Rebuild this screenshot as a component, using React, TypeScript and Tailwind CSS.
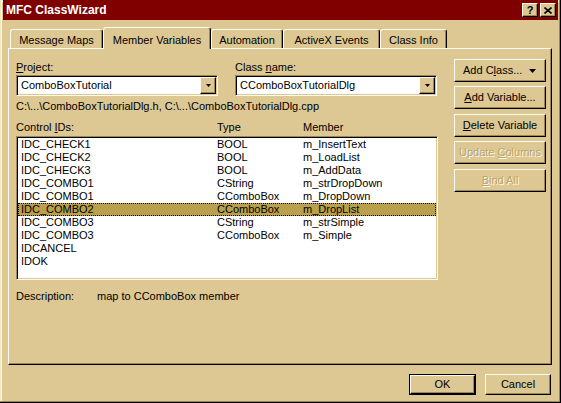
import React from 'react';

const face = 'bg-[#ddc893]';

// raised 3D edge used by buttons and tabs
const raised =
  'border border-t-[#fffbf0] border-l-[#fffbf0] border-b-black border-r-black shadow-[inset_-1px_-1px_0_#9c8855]';
const sunken =
  'border border-t-[#9c8855] border-l-[#9c8855] border-b-[#fffbf0] border-r-[#fffbf0] shadow-[inset_1px_1px_0_#000,inset_-1px_-1px_0_#ddc893]';

const rows = [
  ['IDC_CHECK1', 'BOOL', 'm_InsertText'],
  ['IDC_CHECK2', 'BOOL', 'm_LoadList'],
  ['IDC_CHECK3', 'BOOL', 'm_AddData'],
  ['IDC_COMBO1', 'CString', 'm_strDropDown'],
  ['IDC_COMBO1', 'CComboBox', 'm_DropDown'],
  ['IDC_COMBO2', 'CComboBox', 'm_DropList'],
  ['IDC_COMBO3', 'CString', 'm_strSimple'],
  ['IDC_COMBO3', 'CComboBox', 'm_Simple'],
  ['IDCANCEL', '', ''],
  ['IDOK', '', ''],
];

function Arrow({ w = 7, h = 4 }: { w?: number; h?: number }) {
  return (
    <svg width={w} height={h} viewBox={`0 0 ${w} ${h}`}>
      <path d={`M0 0H${w}L${w / 2} ${h}Z`} fill="#000" />
    </svg>
  );
}

function Combo({ value }: { value: string }) {
  return (
    <div className={`h-[21px] w-[202px] bg-white ${sunken} flex items-center`}>
      <span className="flex-1 pl-[4px] leading-[13px]">{value}</span>
      <div
        className={`mr-[1px] h-[17px] w-[16px] ${face} ${raised} flex items-center justify-center`}
      >
        <Arrow w={5} h={3} />
      </div>
    </div>
  );
}

function SideButton({
  children,
  disabled,
  split,
  className = '',
}: {
  children: React.ReactNode;
  disabled?: boolean;
  split?: boolean;
  className?: string;
}) {
  return (
    <div
      className={`h-[23px] w-[92px] ${face} ${raised} flex items-center ${
        split ? 'justify-between pl-[8px] pr-[9px]' : 'justify-center'
      } ${disabled ? 'text-[#b8a46c] [text-shadow:1px_1px_0_#fffbf0]' : ''} ${className}`}
    >
      {children}
    </div>
  );
}

export default function App() {
  const tabs = [
    { label: 'Message Maps', w: 'w-[93px]' },
    { label: 'Member Variables', w: 'w-[108px]', active: true },
    { label: 'Automation', w: 'w-[72px]' },
    { label: 'ActiveX Events', w: 'w-[97px]' },
    { label: 'Class Info', w: 'w-[67px]' },
  ];

  return (
    <div
      className={`w-[561px] h-[403px] ${face} px-[3px] text-[11px] leading-[13px] text-black font-['Liberation_Sans',Arial,sans-serif] shadow-[inset_-1px_-1px_0_#000,inset_-2px_-2px_0_#9c8855,inset_1px_1px_0_#f3e6c0,inset_2px_2px_0_#fffbf0] overflow-hidden`}
    >
      {/* Title bar */}
      <div className="h-[20px] bg-[#800000] flex items-center pl-[3px] pr-[2px]">
        <span className="flex-1 text-white font-bold text-[12px]">MFC ClassWizard</span>
        <div
          className={`h-[14px] w-[16px] ${face} ${raised} flex items-center justify-center font-bold text-[11px] leading-none`}
        >
          ?
        </div>
        <div
          className={`ml-[2px] h-[14px] w-[16px] ${face} ${raised} flex items-center justify-center`}
        >
          <svg width="8" height="7" viewBox="0 0 8 7">
            <path d="M0.5 0.5L7.5 6.5M7.5 0.5L0.5 6.5" stroke="#000" strokeWidth="1.6" />
          </svg>
        </div>
      </div>

      {/* Tabs */}
      <div className="mt-[7px] ml-[7px] h-[21px] flex items-end">
        {tabs.map((t) => (
          <div
            key={t.label}
            className={`${t.w} ${face} border-t border-l border-r border-t-[#fffbf0] border-l-[#fffbf0] border-r-black shadow-[inset_-1px_0_0_#9c8855] rounded-t-[3px] flex justify-center ${
              t.active ? 'relative z-10 h-[22px] -mb-px pt-[6px]' : 'h-[19px] pt-[4px]'
            }`}
          >
            {t.label}
          </div>
        ))}
      </div>

      {/* Panel */}
      <div
        className={`ml-[5px] w-[544px] h-[317px] border border-t-[#fffbf0] border-l-[#fffbf0] border-b-black border-r-black shadow-[inset_-1px_-1px_0_#9c8855] flex`}
      >
        <div className="ml-[7px] w-[422px] pt-[12px] flex flex-col">
          <div className="flex gap-[17px]">
            <div>
              <div className="h-[13px]">
                <span className="underline">P</span>roject:
              </div>
              <div className="mt-[1px]">
                <Combo value="ComboBoxTutorial" />
              </div>
            </div>
            <div>
              <div className="h-[13px]">
                Class <span className="underline">n</span>ame:
              </div>
              <div className="mt-[1px]">
                <Combo value="CComboBoxTutorialDlg" />
              </div>
            </div>
          </div>

          <div className="mt-[4px] h-[13px]">
            C:\...\ComboBoxTutorialDlg.h, C:\...\ComboBoxTutorialDlg.cpp
          </div>

          <div className="mt-[8px] h-[13px] flex">
            <span className="w-[201px]">
              Control <span className="underline">I</span>Ds:
            </span>
            <span className="w-[86px]">Type</span>
            <span>Member</span>
          </div>

          <div className={`mt-[2px] h-[144px] bg-white ${sunken} p-[1px]`}>
            {rows.map((r, i) => (
              <div
                key={i}
                className={`h-[13px] flex ${
                  i === 5 ? 'bg-[#b9a04d] [outline:1px_dotted_#000] [outline-offset:-1px]' : ''
                }`}
              >
                <span className="w-[199px] pl-[3px]">{r[0]}</span>
                <span className="w-[86px]">{r[1]}</span>
                <span>{r[2]}</span>
              </div>
            ))}
          </div>

          <div className="mt-[10px] h-[13px] flex">
            <span className="w-[81px]">Description:</span>
            <span>map to CComboBox member</span>
          </div>
        </div>

        <div className="ml-[16px] pt-[10px] flex flex-col">
          <SideButton split>
            <span>
              Add C<span className="underline">l</span>ass...
            </span>
            <Arrow />
          </SideButton>
          <SideButton className="mt-[4px]">
            <span>
              <span className="underline">A</span>dd Variable...
            </span>
          </SideButton>
          <SideButton className="mt-[5px]">
            <span>
              <span className="underline">D</span>elete Variable
            </span>
          </SideButton>
          <SideButton disabled className="mt-[4px]">
            <span>
              Update <span className="underline">C</span>olumns
            </span>
          </SideButton>
          <SideButton disabled className="mt-[5px]">
            <span>
              <span className="underline">B</span>ind All
            </span>
          </SideButton>
        </div>
      </div>

      {/* Bottom buttons */}
      <div className="mt-[9px] mr-[7px] flex justify-end gap-[9px]">
        <div className="h-[21px] w-[67px] border border-black">
          <div className={`h-full w-full ${face} ${raised} flex items-center justify-center`}>
            OK
          </div>
        </div>
        <div className={`h-[21px] w-[66px] ${face} ${raised} flex items-center justify-center`}>
          Cancel
        </div>
      </div>
    </div>
  );
}
